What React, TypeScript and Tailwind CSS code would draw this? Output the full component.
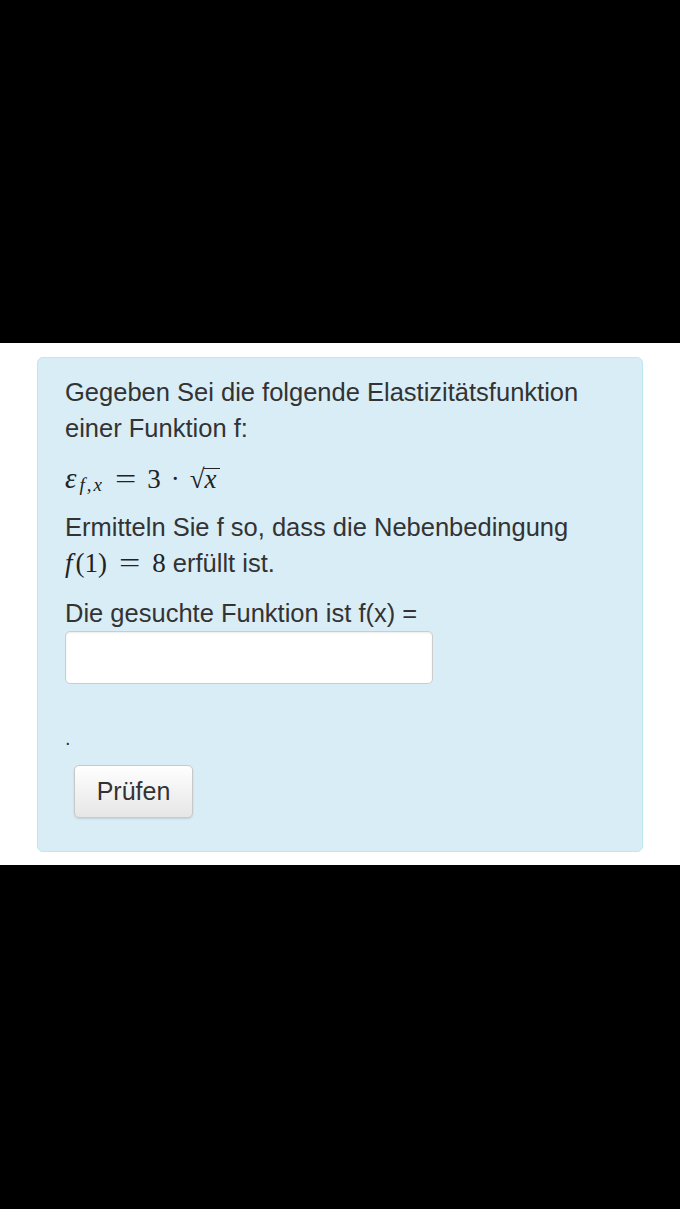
export default function App() {
  return (
    <div className="flex h-[1209px] w-full flex-col bg-black font-['Liberation_Sans',Arial,sans-serif] text-[#333]">
      <div className="h-[343px] shrink-0" />

      <div className="h-[522px] shrink-0 bg-white px-[37px] pt-[14px]">
        <div className="h-[495px] w-[606px] rounded-[6px] border border-[#bce8f1] bg-[#d9edf7] pl-[27px] pr-[20px] pt-[16px]">
          <p className="text-[25.5px] leading-[36px]">
            Gegeben Sei die folgende Elastizitätsfunktion einer Funktion f:
          </p>

          {/* ε_{f,x} = 3 · √x */}
          <div className="mt-[16px] flex items-baseline font-['Liberation_Serif','Times_New_Roman',serif] text-[27px] leading-[32px] text-[#222]">
            <span className="text-[29px] italic">ε</span>
            <span className="relative top-[3px] ml-[3px] text-[19px] italic tracking-[2px]">f,x</span>
            <span className="ml-[14px] inline-block scale-x-[1.4]">=</span>
            <span className="ml-[14px]">3</span>
            <span className="ml-[10px]">·</span>
            <span className="ml-[10px]">√</span>
            <span className="inline-block border-t-[1.5px] border-[#222] pr-[4px] leading-[20px] italic">x</span>
          </div>

          <p className="mt-[11px] text-[25.5px] leading-[36px]">
            Ermitteln Sie f so, dass die Nebenbedingung
            <br />
            <span className="font-['Liberation_Serif','Times_New_Roman',serif] text-[27px] text-[#222]">
              <span className="italic">f</span>
              <span className="ml-[3px]">(1)</span>
              <span className="ml-[15px] inline-block scale-x-[1.4]">=</span>
              <span className="ml-[15px]">8</span>
            </span>{" "}
            erfüllt ist.
          </p>

          <p className="mt-[14px] text-[25.5px] leading-[36px]">Die gesuchte Funktion ist f(x) =</p>

          <input
            type="text"
            className="block h-[53px] w-[368px] rounded-[5px] border border-[#ccc] bg-white px-3 text-[22px] shadow-[inset_0_1px_2px_rgba(0,0,0,0.08)] outline-none"
          />

          <div className="mt-[44px] text-[20px] leading-[20px]">.</div>

          <button
            type="button"
            className="ml-[9px] mt-[17px] h-[53px] w-[119px] rounded-[5px] border border-[#c8c8c8] bg-gradient-to-b from-white to-[#e6e6e6] text-[25px] text-[#333] shadow-[0_1px_2px_rgba(0,0,0,0.12)]"
          >
            Prüfen
          </button>
        </div>
      </div>

      <div className="flex-1" />
    </div>
  );
}
